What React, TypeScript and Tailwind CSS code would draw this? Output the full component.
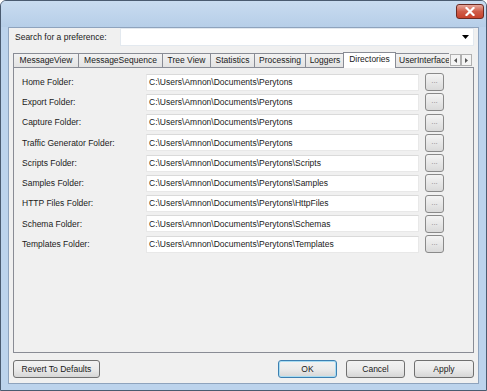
import React from "react";

const rows: [string, string][] = [
  ["Home Folder:", "C:\\Users\\Amnon\\Documents\\Perytons"],
  ["Export Folder:", "C:\\Users\\Amnon\\Documents\\Perytons"],
  ["Capture Folder:", "C:\\Users\\Amnon\\Documents\\Perytons"],
  ["Traffic Generator Folder:", "C:\\Users\\Amnon\\Documents\\Perytons"],
  ["Scripts Folder:", "C:\\Users\\Amnon\\Documents\\Perytons\\Scripts"],
  ["Samples Folder:", "C:\\Users\\Amnon\\Documents\\Perytons\\Samples"],
  ["HTTP Files Folder:", "C:\\Users\\Amnon\\Documents\\Perytons\\HttpFiles"],
  ["Schema Folder:", "C:\\Users\\Amnon\\Documents\\Perytons\\Schemas"],
  ["Templates Folder:", "C:\\Users\\Amnon\\Documents\\Perytons\\Templates"],
];

const tabs: [string, number][] = [
  ["MessageView", 66],
  ["MessageSequence", 85],
  ["Tree View", 49],
  ["Statistics", 45],
  ["Processing", 52],
  ["Loggers", 40],
];

function Btn({ children, w, focus }: { children: React.ReactNode; w: string; focus?: boolean }) {
  return (
    <div
      className={`${w} h-[18px] rounded-[3px] border ${
        focus ? "border-[#3c7fb1] shadow-[inset_0_0_0_1px_#a8dcf2]" : "border-[#707070]"
      } bg-gradient-to-b from-[#f2f2f2] via-[#ebebeb] to-[#d6d6d6] flex items-center justify-center text-[#1a1a1a] whitespace-nowrap`}
    >
      {children}
    </div>
  );
}

export default function App() {
  return (
    <div
      className="w-[487px] h-[391px] bg-[#bcd3ec] border border-[#4a5b70] rounded-t-[6px] flex flex-col overflow-hidden"
      style={{ fontFamily: '"Liberation Sans", Arial, sans-serif' }}
    >
      {/* title bar */}
      <div className="h-[26px] shrink-0 flex items-start justify-end pr-[2px] pt-[3px] bg-gradient-to-b from-[#c9dcf0] to-[#b6cee8]">
        <div className="w-[28px] h-[15px] rounded-[3px] border border-[#6d2a22] bg-gradient-to-b from-[#e5a79c] via-[#cf5c48] to-[#c7422c] flex items-center justify-center">
          <svg width="10" height="9" viewBox="0 0 10 9">
            <path d="M1.5 1 L8.5 8 M8.5 1 L1.5 8" stroke="#ffffff" strokeWidth="2.2" strokeLinecap="square" />
          </svg>
        </div>
      </div>
      {/* client */}
      <div className="flex-1 mx-[7px] mb-[6px] border border-[#8ea3bd] bg-[#f0f0f0] flex flex-col text-[8.5px] text-[#1a1a1a]">
        {/* search row */}
        <div className="flex items-center h-[18px] pl-[6px] pr-[4px]">
          <div className="w-[105px] shrink-0 whitespace-nowrap">Search for a preference:</div>
          <div className="flex-1 h-[18px] bg-white border border-[#e3e9ef] flex items-center justify-end pr-[4px]">
            <svg width="7" height="4" viewBox="0 0 7 4">
              <path d="M0 0 H7 L3.5 4 Z" fill="#000" />
            </svg>
          </div>
        </div>
        {/* tabs */}
        <div className="mt-[5px] ml-[4px] mr-[4px] flex items-end h-[16px] relative z-10">
          {tabs.map(([t, w]) => (
            <div
              key={t}
              style={{ width: w }}
              className="h-[14px] shrink-0 border border-b-0 border-[#898c95] -mr-px bg-gradient-to-b from-[#f2f2f2] to-[#e3e3e3] flex items-center justify-center leading-none whitespace-nowrap"
            >
              {t}
            </div>
          ))}
          <div className="w-[53px] h-[16px] shrink-0 border border-b-0 border-[#898c95] bg-white flex items-center justify-center leading-none -mb-px pb-[2px] -ml-[1px] relative whitespace-nowrap">
            Directories
          </div>
          <div className="w-[54px] h-[14px] shrink-0 border border-b-0 border-r-0 border-[#898c95] bg-gradient-to-b from-[#f2f2f2] to-[#e3e3e3] overflow-hidden whitespace-nowrap pl-[3px] flex items-center leading-none -ml-px">
            UserInterface
          </div>
          <div className="flex h-[14px] items-center ml-[1px]">
            <div className="w-[11px] h-[12px] border border-[#b0b0b0] bg-[#f4f4f4] flex items-center justify-center">
              <svg width="3" height="5" viewBox="0 0 3 5"><path d="M3 0 V5 L0 2.5 Z" fill="#555" /></svg>
            </div>
            <div className="w-[11px] h-[12px] border border-[#b0b0b0] bg-[#f4f4f4] flex items-center justify-center">
              <svg width="3" height="5" viewBox="0 0 3 5"><path d="M0 0 V5 L3 2.5 Z" fill="#555" /></svg>
            </div>
          </div>
        </div>
        {/* panel */}
        <div className="mx-[4px] h-[286px] shrink-0 border border-[#898c95] bg-[#f0f0f0] flex flex-col pt-[4px]">
          {rows.map(([l, p]) => (
            <div key={l} className="flex items-center h-[20.25px] shrink-0">
              <div className="w-[132px] pl-[8px] shrink-0 whitespace-nowrap">{l}</div>
              <div className="w-[273px] h-[17px] bg-white border border-[#e8e8e8] border-t-[#dadada] pl-[2px] flex items-center whitespace-nowrap overflow-hidden">
                {p}
              </div>
              <div className="ml-[6px] w-[19px] h-[18px] rounded-[3px] border border-[#8a8a8a] bg-gradient-to-b from-[#f4f4f4] to-[#dadada] flex items-center justify-center text-[8px] text-[#888] leading-none pb-[2px]">
                ...
              </div>
            </div>
          ))}
        </div>
        {/* bottom buttons */}
        <div className="flex items-center mt-[7px] px-[4px]">
          <Btn w="w-[87px]">Revert To Defaults</Btn>
          <div className="flex-1" />
          <Btn w="w-[59px]" focus>OK</Btn>
          <div className="w-[9px]" />
          <Btn w="w-[59px]">Cancel</Btn>
          <div className="w-[9px]" />
          <Btn w="w-[60px]">Apply</Btn>
        </div>
      </div>
    </div>
  );
}
